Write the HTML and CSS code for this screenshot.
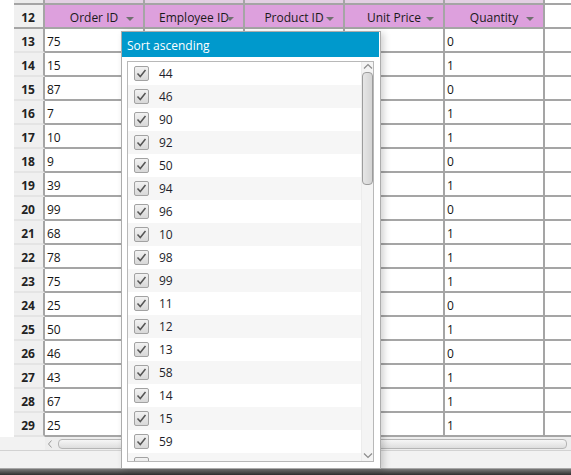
FILE: index.html
```html
<!DOCTYPE html>
<html>
<head>
<meta charset="utf-8">
<link rel="stylesheet" href="styles.css">
</head>
<body>
<div class="app">
  <div class="grid">
    <div class="row sliver"><div class="blank"></div><div class="rh"></div><div class="c"></div><div class="c"></div><div class="c"></div><div class="c"></div><div class="c"></div><div class="fill"></div></div>
    <div class="row head"><div class="blank"></div><div class="rh">12</div>
      <div class="c"><span>Order ID</span><i class="arr"></i></div>
      <div class="c"><span>Employee ID</span><i class="arr"></i></div>
      <div class="c"><span>Product ID</span><i class="arr"></i></div>
      <div class="c"><span>Unit Price</span><i class="arr"></i></div>
      <div class="c"><span>Quantity</span><i class="arr"></i></div>
      <div class="fill"></div></div>
    <div class="row"><div class="blank"></div><div class="rh">13</div><div class="c">75</div><div class="c"></div><div class="c"></div><div class="c"></div><div class="c">0</div><div class="fill"></div></div>
    <div class="row"><div class="blank"></div><div class="rh">14</div><div class="c">15</div><div class="c"></div><div class="c"></div><div class="c"></div><div class="c">1</div><div class="fill"></div></div>
    <div class="row"><div class="blank"></div><div class="rh">15</div><div class="c">87</div><div class="c"></div><div class="c"></div><div class="c"></div><div class="c">0</div><div class="fill"></div></div>
    <div class="row"><div class="blank"></div><div class="rh">16</div><div class="c">7</div><div class="c"></div><div class="c"></div><div class="c"></div><div class="c">1</div><div class="fill"></div></div>
    <div class="row"><div class="blank"></div><div class="rh">17</div><div class="c">10</div><div class="c"></div><div class="c"></div><div class="c"></div><div class="c">1</div><div class="fill"></div></div>
    <div class="row"><div class="blank"></div><div class="rh">18</div><div class="c">9</div><div class="c"></div><div class="c"></div><div class="c"></div><div class="c">0</div><div class="fill"></div></div>
    <div class="row"><div class="blank"></div><div class="rh">19</div><div class="c">39</div><div class="c"></div><div class="c"></div><div class="c"></div><div class="c">1</div><div class="fill"></div></div>
    <div class="row"><div class="blank"></div><div class="rh">20</div><div class="c">99</div><div class="c"></div><div class="c"></div><div class="c"></div><div class="c">0</div><div class="fill"></div></div>
    <div class="row"><div class="blank"></div><div class="rh">21</div><div class="c">68</div><div class="c"></div><div class="c"></div><div class="c"></div><div class="c">1</div><div class="fill"></div></div>
    <div class="row"><div class="blank"></div><div class="rh">22</div><div class="c">78</div><div class="c"></div><div class="c"></div><div class="c"></div><div class="c">1</div><div class="fill"></div></div>
    <div class="row"><div class="blank"></div><div class="rh">23</div><div class="c">75</div><div class="c"></div><div class="c"></div><div class="c"></div><div class="c">1</div><div class="fill"></div></div>
    <div class="row"><div class="blank"></div><div class="rh">24</div><div class="c">25</div><div class="c"></div><div class="c"></div><div class="c"></div><div class="c">0</div><div class="fill"></div></div>
    <div class="row"><div class="blank"></div><div class="rh">25</div><div class="c">50</div><div class="c"></div><div class="c"></div><div class="c"></div><div class="c">1</div><div class="fill"></div></div>
    <div class="row"><div class="blank"></div><div class="rh">26</div><div class="c">46</div><div class="c"></div><div class="c"></div><div class="c"></div><div class="c">0</div><div class="fill"></div></div>
    <div class="row"><div class="blank"></div><div class="rh">27</div><div class="c">43</div><div class="c"></div><div class="c"></div><div class="c"></div><div class="c">1</div><div class="fill"></div></div>
    <div class="row"><div class="blank"></div><div class="rh">28</div><div class="c">67</div><div class="c"></div><div class="c"></div><div class="c"></div><div class="c">1</div><div class="fill"></div></div>
    <div class="row"><div class="blank"></div><div class="rh">29</div><div class="c">25</div><div class="c"></div><div class="c"></div><div class="c"></div><div class="c">1</div><div class="fill"></div></div>
  </div>
  <div class="hscroll">
    <div class="hs-corner"></div>
    <div class="hs-track">
      <svg class="hs-left" width="6" height="8" viewBox="0 0 6 8"><path d="M4.5 0.5 L1.5 4 L4.5 7.5" fill="none" stroke="#9a9a9a" stroke-width="1"/></svg>
      <div class="hs-thumb"></div>
    </div>
  </div>
  <div class="status"></div>
  <div class="taskbar"></div>

  <div class="popup">
    <div class="popup-head">Sort ascending</div>
    <div class="popup-body">
      <div class="list">
        <div class="items">
          <div class="item"><span class="cb"><svg width="15" height="15" viewBox="0 0 15 15"><path d="M3.5 7.5 L6.3 10.5 L11.5 4" fill="none" stroke="#555" stroke-width="1.5"/></svg></span><span>44</span></div>
          <div class="item"><span class="cb"><svg width="15" height="15" viewBox="0 0 15 15"><path d="M3.5 7.5 L6.3 10.5 L11.5 4" fill="none" stroke="#555" stroke-width="1.5"/></svg></span><span>46</span></div>
          <div class="item"><span class="cb"><svg width="15" height="15" viewBox="0 0 15 15"><path d="M3.5 7.5 L6.3 10.5 L11.5 4" fill="none" stroke="#555" stroke-width="1.5"/></svg></span><span>90</span></div>
          <div class="item"><span class="cb"><svg width="15" height="15" viewBox="0 0 15 15"><path d="M3.5 7.5 L6.3 10.5 L11.5 4" fill="none" stroke="#555" stroke-width="1.5"/></svg></span><span>92</span></div>
          <div class="item"><span class="cb"><svg width="15" height="15" viewBox="0 0 15 15"><path d="M3.5 7.5 L6.3 10.5 L11.5 4" fill="none" stroke="#555" stroke-width="1.5"/></svg></span><span>50</span></div>
          <div class="item"><span class="cb"><svg width="15" height="15" viewBox="0 0 15 15"><path d="M3.5 7.5 L6.3 10.5 L11.5 4" fill="none" stroke="#555" stroke-width="1.5"/></svg></span><span>94</span></div>
          <div class="item"><span class="cb"><svg width="15" height="15" viewBox="0 0 15 15"><path d="M3.5 7.5 L6.3 10.5 L11.5 4" fill="none" stroke="#555" stroke-width="1.5"/></svg></span><span>96</span></div>
          <div class="item"><span class="cb"><svg width="15" height="15" viewBox="0 0 15 15"><path d="M3.5 7.5 L6.3 10.5 L11.5 4" fill="none" stroke="#555" stroke-width="1.5"/></svg></span><span>10</span></div>
          <div class="item"><span class="cb"><svg width="15" height="15" viewBox="0 0 15 15"><path d="M3.5 7.5 L6.3 10.5 L11.5 4" fill="none" stroke="#555" stroke-width="1.5"/></svg></span><span>98</span></div>
          <div class="item"><span class="cb"><svg width="15" height="15" viewBox="0 0 15 15"><path d="M3.5 7.5 L6.3 10.5 L11.5 4" fill="none" stroke="#555" stroke-width="1.5"/></svg></span><span>99</span></div>
          <div class="item"><span class="cb"><svg width="15" height="15" viewBox="0 0 15 15"><path d="M3.5 7.5 L6.3 10.5 L11.5 4" fill="none" stroke="#555" stroke-width="1.5"/></svg></span><span>11</span></div>
          <div class="item"><span class="cb"><svg width="15" height="15" viewBox="0 0 15 15"><path d="M3.5 7.5 L6.3 10.5 L11.5 4" fill="none" stroke="#555" stroke-width="1.5"/></svg></span><span>12</span></div>
          <div class="item"><span class="cb"><svg width="15" height="15" viewBox="0 0 15 15"><path d="M3.5 7.5 L6.3 10.5 L11.5 4" fill="none" stroke="#555" stroke-width="1.5"/></svg></span><span>13</span></div>
          <div class="item"><span class="cb"><svg width="15" height="15" viewBox="0 0 15 15"><path d="M3.5 7.5 L6.3 10.5 L11.5 4" fill="none" stroke="#555" stroke-width="1.5"/></svg></span><span>58</span></div>
          <div class="item"><span class="cb"><svg width="15" height="15" viewBox="0 0 15 15"><path d="M3.5 7.5 L6.3 10.5 L11.5 4" fill="none" stroke="#555" stroke-width="1.5"/></svg></span><span>14</span></div>
          <div class="item"><span class="cb"><svg width="15" height="15" viewBox="0 0 15 15"><path d="M3.5 7.5 L6.3 10.5 L11.5 4" fill="none" stroke="#555" stroke-width="1.5"/></svg></span><span>15</span></div>
          <div class="item"><span class="cb"><svg width="15" height="15" viewBox="0 0 15 15"><path d="M3.5 7.5 L6.3 10.5 L11.5 4" fill="none" stroke="#555" stroke-width="1.5"/></svg></span><span>59</span></div>
          <div class="item"><span class="cb"></span></div>
        </div>
        <div class="vscroll">
          <svg class="vs-arrow" width="10" height="7" viewBox="0 0 10 7"><path d="M1 5.5 L5 1.5 L9 5.5" fill="none" stroke="#8c8c8c" stroke-width="1.2"/></svg>
          <div class="vs-thumb"></div>
          <div class="vs-space"></div>
          <svg class="vs-arrow" width="10" height="7" viewBox="0 0 10 7"><path d="M1 1.5 L5 5.5 L9 1.5" fill="none" stroke="#8c8c8c" stroke-width="1.2"/></svg>
        </div>
      </div>
    </div>
  </div>
</div>
</body>
</html>
```

FILE: styles.css
```css
* { box-sizing: border-box; }
html, body { margin: 0; padding: 0; }
body {
  width: 571px;
  height: 475px;
  overflow: hidden;
  background: #ffffff;
  font-family: "Open Sans", "Noto Sans", sans-serif;
  font-size: 12px;
  color: #141414;
}
.app {
  position: relative;
  width: 571px;
  height: 475px;
  display: flex;
  flex-direction: column;
}
.grid { display: flex; flex-direction: column; }
.row {
  display: flex;
  height: 24px;
}
.blank { width: 14px; flex: none; background: #fff; }
.rh {
  width: 31px;
  flex: none;
  background: #f0f0f0;
  border-right: 2px solid #a5a5a5;
  border-bottom: 2px solid #e4e4e4;
  font-weight: bold;
  color: #222;
  display: flex;
  align-items: center;
  justify-content: center;
  padding-right: 1px;
  padding-top: 4px;
  line-height: 1;
}
.c {
  width: 100px;
  flex: none;
  border-right: 2px solid #a5a5a5;
  border-bottom: 2px solid #a5a5a5;
  padding-left: 2px;
  padding-top: 4px;
  display: flex;
  align-items: center;
  line-height: 1;
}
.fill {
  flex: 1;
  border-bottom: 2px solid #a5a5a5;
}
.sliver { height: 5px; }
.sliver .c, .sliver .rh { padding-top: 0; }
.sliver .c { background: #e3cfe3; }
.sliver .rh { background: #ececec; border-bottom-color: #a5a5a5; }
.head .c {
  background: #dda0dd;
  position: relative;
  justify-content: center;
  padding-left: 0;
  color: #1a1a1a;
}
.head .rh { border-bottom-color: #a5a5a5; }
.arr {
  position: absolute;
  right: 9px;
  top: 12px;
  width: 0;
  height: 0;
  border-left: 4px solid transparent;
  border-right: 4px solid transparent;
  border-top: 4px solid #707070;
}
.hscroll {
  height: 13px;
  display: flex;
  background: #f0f0f0;
}
.hs-corner { width: 45px; flex: none; background: #f2f2f2; }
.hs-track {
  flex: 1;
  display: flex;
  align-items: center;
  padding-right: 4px;
  background: #ededed;
}
.hs-left { margin-left: 2px; margin-right: 5px; }
.hs-thumb {
  flex: 1;
  height: 10px;
  border: 1px solid #b5b5b5;
  border-radius: 4px;
  background: linear-gradient(#f6f6f6, #dedede);
}
.status {
  height: 19px;
  background: #f2f2f2;
  border-top: 1px solid #d2d2d2;
  border-bottom: 1px solid #a8a8a8;
}
.taskbar {
  flex: 1;
  background: linear-gradient(#7a7a7a, #2e2e2e);
}
.popup {
  position: absolute;
  left: 121px;
  top: 31px;
  width: 260px;
  height: 438px;
  background: #ffffff;
  border: 1px solid #acacac;
  box-shadow: 3px 2px 7px rgba(0,0,0,0.18);
  display: flex;
  flex-direction: column;
  z-index: 5;
}
.popup-head {
  height: 25px;
  background: #0099cc;
  color: #ffffff;
  padding-left: 5px;
  padding-top: 1px;
  display: flex;
  align-items: center;
  margin-right: 1px;
}
.popup-body {
  flex: 1;
  padding: 4px 6px 6px 5px;
  display: flex;
  min-height: 0;
}
.list {
  flex: 1;
  border: 1px solid #b8b8b8;
  display: flex;
  overflow: hidden;
}
.items { flex: 1; overflow: hidden; }
.item {
  height: 23px;
  display: flex;
  align-items: center;
  padding-left: 6px;
  color: #1e1e2a;
}
.item:nth-child(even) { background: #f6f6f6; }
.cb {
  width: 15px;
  height: 15px;
  border: 1px solid #a2a2a2;
  border-radius: 2px;
  background: linear-gradient(#f2f2f2, #d8d8d8);
  margin-right: 10px;
  position: relative;
  flex: none;
}
.cb svg { position: absolute; left: -1px; top: -1px; }
.vscroll {
  width: 12px;
  flex: none;
  background: #f4f4f4;
  border-left: 1px solid #ececec;
  display: flex;
  flex-direction: column;
  align-items: center;
  padding-top: 1px;
  padding-bottom: 2px;
}
.vs-arrow { flex: none; }
.vs-thumb {
  margin-top: 2px;
  width: 11px;
  height: 113px;
  border: 1px solid #9c9c9c;
  border-radius: 4px;
  background: linear-gradient(90deg, #e6e6e6, #d4d4d4);
  flex: none;
}
.vs-space { flex: 1; }
```
